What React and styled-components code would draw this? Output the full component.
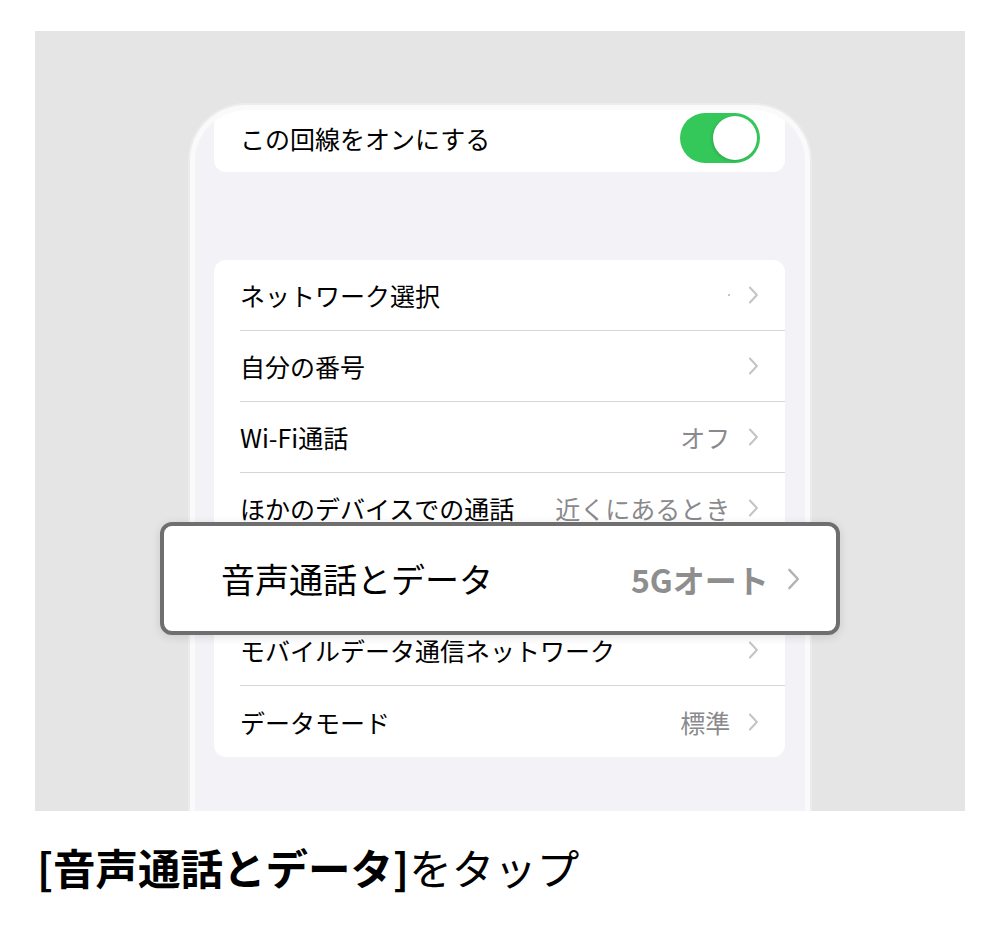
import React from 'react'
import styled, { createGlobalStyle } from 'styled-components'

const GlobalStyle = createGlobalStyle`
    body {
        margin: 0;
        background: #ffffff;
        font-family: "Noto Sans CJK JP", "Noto Sans", sans-serif;
    }
`

const Page = styled.div`
    width: 1000px;
    height: 940px;
    background: #ffffff;
    padding-top: 31px;
    box-sizing: border-box;
`

const Stage = styled.div`
    position: relative;
    width: 930px;
    height: 780px;
    margin-left: 35px;
    background: #e5e5e5;
    display: flex;
    justify-content: center;
    padding-top: 74px;
    box-sizing: border-box;
    overflow: hidden;
`

const Phone = styled.div`
    width: 620px;
    height: 706px;
    flex: none;
    box-sizing: border-box;
    border: 5px solid #fafafa;
    border-bottom: none;
    border-radius: 56px 56px 0 0;
    box-shadow: 0 0 0 2px #ececec;
    background: #f2f2f7;
    overflow: hidden;
    padding: 0 20px 0 19px;
    display: flex;
    flex-direction: column;
`

const Card = styled.div`
    background: #ffffff;
    border-radius: ${p => (p.$flat ? '0 0 12px 12px' : '12px')};
    margin-top: ${p => p.$gap || 0}px;
    overflow: hidden;
`

const SwitchRow = styled.div`
    height: 62px;
    display: flex;
    align-items: center;
    justify-content: space-between;
    padding: 0 25px 6px 26px;
    box-sizing: border-box;
    font-size: 25px;
    color: #000000;
`

const Track = styled.div`
    width: 80px;
    height: 50px;
    border-radius: 25px;
    background: #34c759;
    display: flex;
    align-items: center;
    justify-content: flex-end;
    padding-right: 3px;
    box-sizing: border-box;
`

const Knob = styled.div`
    width: 44px;
    height: 44px;
    border-radius: 50%;
    background: #ffffff;
    box-shadow: -1px 1px 3px rgba(0, 0, 0, 0.15);
`

const Row = styled.div`
    height: 71px;
    display: flex;
    align-items: center;
    margin-left: 26px;
    padding-right: 26px;
    border-bottom: ${p => (p.$last ? 'none' : '1px solid #d6d6d9')};
    box-sizing: border-box;
    & > * {
        visibility: ${p => (p.$covered ? 'hidden' : 'visible')};
    }
`

const Label = styled.span`
    flex: 1;
    font-size: 25px;
    color: #000000;
    white-space: nowrap;
`

const Value = styled.span`
    font-size: 25px;
    color: #8a8a8e;
    margin-right: 18px;
    white-space: nowrap;
`

const Speck = styled.span`
    width: 2px;
    height: 2px;
    background: #c6c6c6;
    margin-right: 18px;
`

const Callout = styled.div`
    position: absolute;
    left: 125px;
    top: 491px;
    width: 680px;
    height: 113px;
    box-sizing: border-box;
    border: 4px solid #6f6f6f;
    border-radius: 12px;
    background: #ffffff;
    box-shadow: 0 2px 10px rgba(0, 0, 0, 0.12);
    display: flex;
    align-items: center;
    padding: 0 36px 0 57px;
`

const CalloutLabel = styled.span`
    flex: 1;
    font-size: 34px;
    color: #000000;
`

const CalloutValue = styled.span`
    font-size: 32px;
    font-weight: 700;
    color: #8e8e8e;
    margin-right: 18px;
`

const Caption = styled.div`
    margin: 26px 0 0 37px;
    font-size: 42.5px;
    line-height: 60px;
    color: #000000;
    white-space: nowrap;
    b {
        font-weight: 700;
    }
`

const Chevron = ({ size = 18, color = '#c4c4c7' }) => (
    <svg width={size * 0.6} height={size} viewBox="0 0 10 18" fill="none">
        <path d="M1.5 1.5 L8.5 9 L1.5 16.5" stroke={color} strokeWidth="2" strokeLinecap="round" strokeLinejoin="round" />
    </svg>
)

const rows = [
    { label: 'ネットワーク選択', speck: true },
    { label: '自分の番号' },
    { label: 'Wi-Fi通話', value: 'オフ' },
    { label: 'ほかのデバイスでの通話', value: '近くにあるとき' },
    { label: '音声通話とデータ', value: '5Gオート', covered: true },
    { label: 'モバイルデータ通信ネットワーク' },
    { label: 'データモード', value: '標準' },
]

const App = () => {
    return (
        <Page>
            <GlobalStyle />
            <Stage>
                <Phone>
                    <Card $flat>
                        <SwitchRow>
                            <span>この回線をオンにする</span>
                            <Track>
                                <Knob />
                            </Track>
                        </SwitchRow>
                    </Card>
                    <Card $gap={88}>
                        {rows.map((r, i) => (
                            <Row key={r.label} $last={i === rows.length - 1} $covered={r.covered}>
                                <Label>{r.label}</Label>
                                {r.speck && <Speck />}
                                {r.value && <Value>{r.value}</Value>}
                                <Chevron />
                            </Row>
                        ))}
                    </Card>
                </Phone>
                <Callout>
                    <CalloutLabel>音声通話とデータ</CalloutLabel>
                    <CalloutValue>5Gオート</CalloutValue>
                    <Chevron size={22} color="#b3b3b3" />
                </Callout>
            </Stage>
            <Caption>
                <b>[音声通話とデータ]</b>をタップ
            </Caption>
        </Page>
    )
}

export default App
